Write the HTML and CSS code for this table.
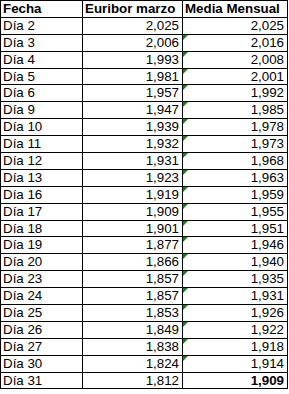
FILE: index.html
```html
<!DOCTYPE html>
<html lang="es">
<head>
<meta charset="utf-8">
<title>Euribor marzo</title>
<link rel="stylesheet" href="styles.css">
</head>
<body>
<div class="sheet">
  <div class="cell head">Fecha</div><div class="cell head">Euribor marzo</div><div class="cell head">Media Mensual</div>
  <div class="cell">Día 2</div><div class="cell num">2,025</div><div class="cell num">2,025</div>
  <div class="cell">Día 3</div><div class="cell num">2,006</div><div class="cell num flag">2,016</div>
  <div class="cell">Día 4</div><div class="cell num">1,993</div><div class="cell num flag">2,008</div>
  <div class="cell">Día 5</div><div class="cell num">1,981</div><div class="cell num flag">2,001</div>
  <div class="cell">Día 6</div><div class="cell num">1,957</div><div class="cell num flag">1,992</div>
  <div class="cell">Día 9</div><div class="cell num">1,947</div><div class="cell num flag">1,985</div>
  <div class="cell">Día 10</div><div class="cell num">1,939</div><div class="cell num flag">1,978</div>
  <div class="cell">Día 11</div><div class="cell num">1,932</div><div class="cell num flag">1,973</div>
  <div class="cell">Día 12</div><div class="cell num">1,931</div><div class="cell num flag">1,968</div>
  <div class="cell">Día 13</div><div class="cell num">1,923</div><div class="cell num flag">1,963</div>
  <div class="cell">Día 16</div><div class="cell num">1,919</div><div class="cell num flag">1,959</div>
  <div class="cell">Día 17</div><div class="cell num">1,909</div><div class="cell num flag">1,955</div>
  <div class="cell">Día 18</div><div class="cell num">1,901</div><div class="cell num flag">1,951</div>
  <div class="cell">Día 19</div><div class="cell num">1,877</div><div class="cell num flag">1,946</div>
  <div class="cell">Día 20</div><div class="cell num">1,866</div><div class="cell num flag">1,940</div>
  <div class="cell">Día 23</div><div class="cell num">1,857</div><div class="cell num flag">1,935</div>
  <div class="cell">Día 24</div><div class="cell num">1,857</div><div class="cell num flag">1,931</div>
  <div class="cell">Día 25</div><div class="cell num">1,853</div><div class="cell num flag">1,926</div>
  <div class="cell">Día 26</div><div class="cell num">1,849</div><div class="cell num flag">1,922</div>
  <div class="cell">Día 27</div><div class="cell num">1,838</div><div class="cell num flag">1,918</div>
  <div class="cell">Día 30</div><div class="cell num">1,824</div><div class="cell num flag">1,914</div>
  <div class="cell">Día 31</div><div class="cell num">1,812</div><div class="cell num total">1,909</div>
</div>
</body>
</html>
```

FILE: styles.css
```css
html, body {
  margin: 0;
  padding: 0;
  background: #ffffff;
}

.sheet {
  display: grid;
  grid-template-columns: 81px 99px 104px;
  grid-auto-rows: 15.9px;
  gap: 1px;
  width: max-content;
  background: #000000;
  border: 1px solid #000000;
  font-family: "Liberation Sans", Arial, sans-serif;
  font-size: 13.33px;
  color: #000000;
}

.cell {
  position: relative;
  background: #ffffff;
  padding: 0 3px 0 2px;
  line-height: 16px;
  white-space: nowrap;
  overflow: hidden;
}

.head {
  font-weight: bold;
}

.num {
  text-align: right;
}

.total {
  font-weight: bold;
}

.flag::before {
  content: "";
  position: absolute;
  left: 0;
  top: 0;
  width: 0;
  height: 0;
  border-top: 5px solid #1a7f1a;
  border-right: 5px solid transparent;
}
```
